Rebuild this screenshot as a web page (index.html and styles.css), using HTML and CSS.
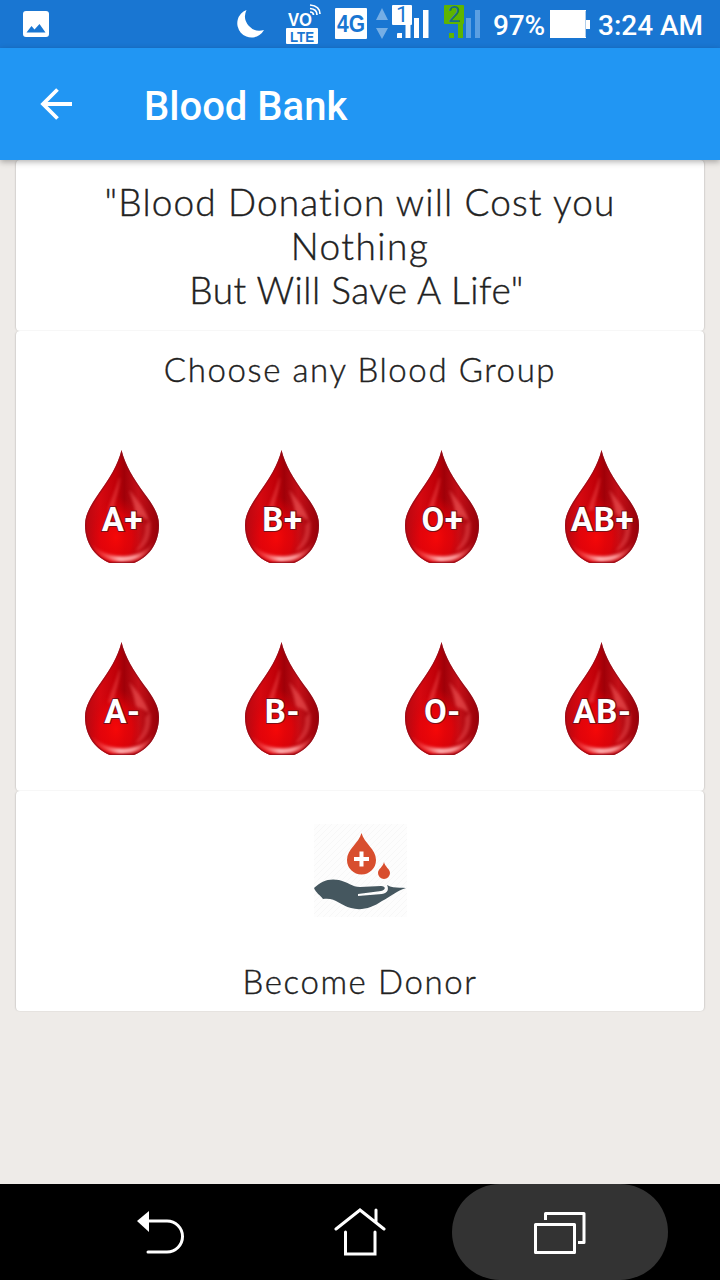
FILE: index.html
```html
<!DOCTYPE html>
<html lang="en">
<head>
<meta charset="utf-8">
<title>Blood Bank</title>
<link rel="stylesheet" href="styles.css">
</head>
<body>
<svg class="defs" width="0" height="0" aria-hidden="true">
  <defs>
    <linearGradient id="body" x1="0" y1="0" x2="1" y2="0">
      <stop offset="0" stop-color="#b80710"/><stop offset=".2" stop-color="#d60810"/>
      <stop offset=".42" stop-color="#c00009"/><stop offset=".53" stop-color="#a00008"/>
      <stop offset=".72" stop-color="#c41018"/><stop offset="1" stop-color="#960008"/>
    </linearGradient>
    <radialGradient id="glow" cx=".42" cy=".77" r=".36">
      <stop offset="0" stop-color="#f50808"/><stop offset=".6" stop-color="#e60309" stop-opacity=".8"/>
      <stop offset="1" stop-color="#d00008" stop-opacity="0"/>
    </radialGradient>
    <linearGradient id="rim" x1="0" y1="0" x2="1" y2="0">
      <stop offset="0" stop-color="#f33" stop-opacity=".2"/><stop offset=".45" stop-color="#ffb4b4"/>
      <stop offset=".7" stop-color="#ff9c9c"/><stop offset="1" stop-color="#f44" stop-opacity=".2"/>
    </linearGradient>
    <filter id="soft" x="-20%" y="-20%" width="140%" height="140%"><feGaussianBlur stdDeviation="1.5"/></filter>
    <clipPath id="dropclip"><path d="M36.500 0C40 15 49 29 59 43C68 55 74 64 74 75C74 95 62 108 49 113H25C12 108 0 95 0 75C0 64 6 55 14 43C24 29 33 15 36.500 0Z"/></clipPath>
    <g id="drop" clip-path="url(#dropclip)">
      <path fill="url(#body)" d="M0 0H74V113H0Z"/>
      <path fill="url(#glow)" d="M0 0H74V113H0Z"/>
      <path filter="url(#soft)" fill="#ef4a4a" opacity=".55" d="M34 28C31 40 26 48 23 61L29 60C30 48 34 42 35 28Z"/>
      <path filter="url(#soft)" fill="#f05b5b" opacity=".6" d="M44 40C52 49 61 60 64 71C59 67 55 66 51 64C49 54 47 48 44 40Z"/>
      <path filter="url(#soft)" fill="#ff6969" opacity=".35" d="M65 70C68 88 59 99 50 101C58 93 61 83 60 76Z"/>
      <path filter="url(#soft)" fill="url(#rim)" d="M6 93C19 110 55 112 69 92C60 117 16 119 6 93Z"/>
      <path fill="none" stroke="#8e101b" stroke-opacity=".65" stroke-width="2.500" d="M36.500 0C40 15 49 29 59 43C68 55 74 64 74 75C74 95 62 108 49 113H25C12 108 0 95 0 75C0 64 6 55 14 43C24 29 33 15 36.500 0Z"/>
    </g>
    <pattern id="hatch" width="6" height="6" patternUnits="userSpaceOnUse"><path d="M-1 7L7-1" stroke="#f7f7f7" stroke-width="1"/></pattern>
  </defs>
</svg>
<div class="screen">
  <header class="status">
    <svg class="status-icons" width="720" height="48" viewBox="0 0 720 48">
      <rect x="23" y="11" width="26" height="26" rx="3" fill="#fff"/>
      <path fill="#1976d2" d="M26.500 32.500L31.500 26L34.500 29.500L39.500 24L45.500 32.500Z"/>
      <path fill="#fff" d="M246.500 10A14.200 14.200 0 1 0 264 30A14.500 14.500 0 0 1 246.500 10Z"/>
      <text x="288" y="25.500" class="vo" textLength="24" lengthAdjust="spacingAndGlyphs">VO</text>
      <g fill="none" stroke="#fff" stroke-width="1.700"><path d="M310 12Q313.500 12 313.500 15"/><path d="M310 8.500Q317 9 317 15"/><path d="M310 5Q320 6 320 14"/></g>
      <rect x="286" y="28" width="32" height="16" rx="1" fill="#fff"/>
      <text x="290" y="41.500" class="lte" textLength="24" lengthAdjust="spacingAndGlyphs">LTE</text>
      <rect x="335" y="8" width="32" height="31" rx="1" fill="#fff"/>
      <text x="337" y="32" class="g4" textLength="28" lengthAdjust="spacingAndGlyphs">4G</text>
      <path fill="#75aee5" d="M376 20L382 8L388 20ZM376 28H388L382 39Z"/>
      <path fill="#fff" d="M397 34Q397 33 398 33H402V38H397ZM405.500 25H410.500V38H405.500ZM414 18H419V38H414ZM423 10H428.500V38H423Z"/>
      <rect x="392" y="5" width="20" height="20" rx="1" fill="#fff"/>
      <text x="396" y="22" class="sim">1</text>
      <path fill="#5eb400" d="M449 33H454V38H449ZM458 24H463V38H458Z"/>
      <path fill="#5b9fe2" d="M466 18H471V38H466ZM475 10H480V38H475Z"/>
      <rect x="444" y="5" width="20" height="19" rx="1" fill="#5eb400"/>
      <text x="448" y="22" class="sim sim2">2</text>
      <text x="493" y="35" class="clock" textLength="52">97%</text>
      <path fill="#fff" d="M550 10H586V20H590V29H586V38H550Z"/><path d="M585.500 11V37" stroke="#b0cdea"/>
      <text x="598" y="35" class="clock" textLength="105">3:24 AM</text>
    </svg>
  </header>
  <nav class="appbar">
    <svg width="32" height="32" viewBox="0 0 32 32" fill="none" stroke="#fff" stroke-width="3.800"><path d="M32 16H3M17.500 1.500L3 16L17.500 30.500"/></svg>
    <h1>Blood Bank</h1>
  </nav>
  <main class="cards">
    <section class="card quote">
      <p><span class="q1">"Blood Donation will Cost you</span><br><span class="q2">Nothing</span><br><span class="q3">But Will Save A Life"</span></p>
    </section>
    <section class="card groups">
      <h2>Choose any Blood Group</h2>
      <div class="grid">
        <div class="cell"><svg viewBox="0 0 74 113"><use href="#drop"/><text x="37.500" y="81">A+</text></svg></div>
        <div class="cell"><svg viewBox="0 0 74 113"><use href="#drop"/><text x="37.500" y="81">B+</text></svg></div>
        <div class="cell"><svg viewBox="0 0 74 113"><use href="#drop"/><text x="37.500" y="81">O+</text></svg></div>
        <div class="cell"><svg viewBox="0 0 74 113"><use href="#drop"/><text x="37.500" y="81">AB+</text></svg></div>
        <div class="cell"><svg viewBox="0 0 74 113"><use href="#drop"/><text x="37.500" y="81">A-</text></svg></div>
        <div class="cell"><svg viewBox="0 0 74 113"><use href="#drop"/><text x="37.500" y="81">B-</text></svg></div>
        <div class="cell"><svg viewBox="0 0 74 113"><use href="#drop"/><text x="37.500" y="81">O-</text></svg></div>
        <div class="cell"><svg viewBox="0 0 74 113"><use href="#drop"/><text x="37.500" y="81">AB-</text></svg></div>
      </div>
    </section>
    <section class="card donor">
      <svg width="93" height="93" viewBox="0 0 93 93">
        <rect width="93" height="93" fill="#fdfdfd"/><rect width="93" height="93" fill="url(#hatch)"/>
        <path fill="#d84e2e" d="M47.500 9C50 19 62 25 62 36A14.500 14.500 0 0 1 33 36C33 25 45 19 47.500 9Z"/>
        <path stroke="#fff" stroke-width="4" d="M40 35H55M47.500 27.500V42.500"/>
        <path fill="#d84e2e" d="M70 38C71 43 76 45 76 49A6 6 0 0 1 64 49C64 45 69 43 70 38Z"/>
        <path fill="#45575f" d="M0 64C7 57 15 54 25 56C34 58 38 63 46 63L67 62C72 62 72 66 67 67L44 70V72L68 70C74 69 75 65 73 61C79 65 86 63 92 64C82 67 76 73 68 77C58 84 47 87 37 84C26 81 21 73 9 75C6 71 2 69 0 64Z"/>
      </svg>
      <h2>Become Donor</h2>
    </section>
  </main>
  <footer class="navbar">
    <svg class="back" width="50" height="48" viewBox="0 0 50 48"><path fill="#fff" d="M0 12L12 2V23Z"/><path fill="none" stroke="#fff" stroke-width="3" stroke-linecap="round" d="M11 12H30A15.500 15.500 0 0 1 30 43H11"/></svg>
    <svg class="home" width="52" height="50" viewBox="0 0 52 50" fill="none" stroke="#fff" stroke-width="3" stroke-linecap="round"><path d="M2 22L26 3L50 22M42 3V15M11.500 25V47H41V25"/></svg>
    <div class="recent"><svg width="52" height="44" viewBox="0 0 52 44" fill="none" stroke="#fff" stroke-width="3" stroke-linejoin="round"><rect x="1.500" y="13.500" width="39" height="28"/><path d="M11.500 9V2.500H50V31.500H44"/></svg></div>
  </footer>
</div>
</body>
</html>
```

FILE: styles.css
```css
* { box-sizing: border-box; }
body { margin: 0; background: #eeebe8; font-family: Roboto, "Noto Sans", sans-serif; }
h1, h2, p { margin: 0; }
.defs { position: absolute; }
.screen { width: 720px; height: 1280px; display: flex; flex-direction: column; overflow: hidden; }
.status { height: 48px; flex: none; background: #1976d2; }
.status-icons { display: block; }
.vo { font: 700 19px "Liberation Sans", sans-serif; fill: #fff; }
.lte { font: 700 15px "Liberation Sans", sans-serif; fill: #1976d2; }
.g4 { font: 700 23px "Liberation Sans", sans-serif; fill: #1976d2; }
.sim { font: 400 22px Roboto, sans-serif; fill: #1976d2; }
.sim2 { fill: #176b8c; }
.clock { font: 500 28px Roboto, sans-serif; fill: #fff; }
.appbar { height: 112px; flex: none; display: flex; align-items: center; gap: 72px; padding-left: 40px; background: #2196f3; box-shadow: 0 2px 6px rgba(0,0,0,.3); z-index: 1; }
.appbar h1 { font: 500 40px/48px Roboto, sans-serif; color: #fff; padding-top: 6px; }
.cards { flex: 1; padding: 0 16px; }
.card { background: #fff; border-radius: 4px; box-shadow: -1px 0 2px -1px rgba(0,0,0,.35), 1px 0 2px -1px rgba(0,0,0,.35); text-align: center; color: #212121; font-family: Lato, sans-serif; -webkit-text-stroke: .4px #212121; }
.quote { height: 171px; padding-top: 20px; font-size: 37px; line-height: 44px; font-weight: 300; white-space: nowrap; }
.q1 { letter-spacing: 1.13px; }
.q2 { letter-spacing: 1.5px; }
.q3 { letter-spacing: .5px; padding-right: 7px; }
.card h2 { font-weight: 300; font-size: 33px; line-height: 40px; letter-spacing: 1.6px; }
.groups { height: 460px; padding-top: 18px; }
.grid { display: grid; grid-template-columns: repeat(4, 160px); grid-auto-rows: 192px; padding-left: 26px; padding-top: 61px; -webkit-text-stroke: 0; }
.cell svg { display: block; width: 74px; height: 113px; margin-left: 43px; overflow: visible; }
.cell text { font: 700 33px Roboto, sans-serif; letter-spacing: .7px; text-anchor: middle; fill: #fff; stroke: #7a1018; stroke-width: 2px; -webkit-text-stroke: 2px #7a1018; paint-order: stroke; }
.donor { height: 220px; padding-top: 33px; display: flex; flex-direction: column; align-items: center; gap: 44px; }
.navbar { height: 96px; flex: none; background: #000; display: flex; }
.back { margin: 25px 0 0 137px; }
.home { margin: 23px 0 0 147px; }
.recent { width: 216px; height: 96px; margin-left: 66px; border-radius: 48px; background: #333; padding: 27px 0 0 82px; }
```
